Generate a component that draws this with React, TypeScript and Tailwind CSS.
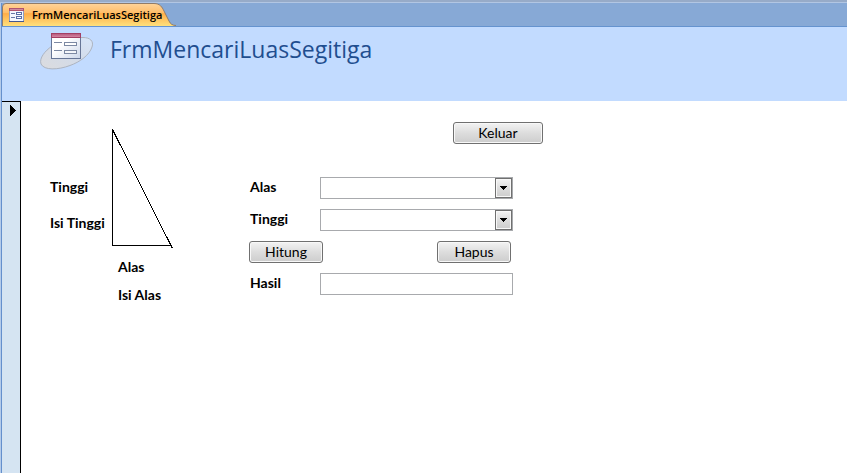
import { useState } from "react";
import type { ReactNode } from "react";

const labelFont =
  "font-['Lato','Liberation_Sans',sans-serif] text-[14px] leading-5 font-bold text-black";

function FormIcon() {
  return (
    <svg width="15" height="14" viewBox="0 0 15 14" aria-hidden="true" shapeRendering="crispEdges">
      <rect x="0.5" y="0.5" width="14" height="13" fill="#f4f7fd" stroke="#8d9dc4" />
      <rect x="0" y="0" width="15" height="3" fill="#b0546f" />
      <rect x="1" y="1" width="13" height="1" fill="#d08a9c" />
      <path d="M2 5.5h4M2 9.5h4" stroke="#6878a8" />
      <rect x="7.5" y="4.5" width="5" height="2" fill="#fff" stroke="#5a6ea6" />
      <rect x="7.5" y="8.5" width="5" height="2" fill="#fff" stroke="#5a6ea6" />
      <path d="M0 13.5h15" stroke="#44578f" />
    </svg>
  );
}

function FormLogo() {
  return (
    <svg width="54" height="38" viewBox="0 0 54 38" aria-hidden="true">
      <defs>
        <linearGradient id="disc" x1="0" y1="1" x2="1" y2="0">
          <stop offset="0" stopColor="#dcdcde" />
          <stop offset="0.5" stopColor="#d3dbe8" />
          <stop offset="1" stopColor="#d6e5fa" />
        </linearGradient>
        <linearGradient id="sheet" x1="0" y1="0" x2="1" y2="1">
          <stop offset="0.4" stopColor="#ffffff" />
          <stop offset="1" stopColor="#ccd7ea" />
        </linearGradient>
        <linearGradient id="bar" x1="0" y1="0" x2="0" y2="1">
          <stop offset="0" stopColor="#b45779" />
          <stop offset="1" stopColor="#d98aa8" />
        </linearGradient>
      </defs>
      <path
        d="M43 4.500C50 4.500 54 8 52 14C49.500 22 40 29 30 32.500C18 37 4 37.500 1 31C-1 25 5 18 12 13C21 7.500 33 4.500 43 4.500Z"
        fill="url(#disc)"
        stroke="#adb4c0"
      />
      <rect x="11.500" y="0.500" width="29" height="25" fill="url(#sheet)" stroke="#667596" />
      <rect x="11.500" y="0.500" width="29" height="4" fill="url(#bar)" stroke="#a33f64" />
      <path d="M14 9.500h8M14 17.500h8" stroke="#7c89a3" />
      <rect x="24.500" y="9.500" width="12" height="3" fill="#fff" stroke="#7c89a3" />
      <rect x="24.500" y="17.500" width="12" height="3" fill="#f4f6fa" stroke="#7c89a3" />
    </svg>
  );
}

function DocumentTab() {
  return (
    <div className="relative h-[23px] w-[176px]">
      <svg className="absolute inset-0" width="176" height="23" viewBox="0 0 176 23" aria-hidden="true">
        <defs>
          <linearGradient id="tab" x1="0" y1="0" x2="0" y2="1">
            <stop offset="0" stopColor="#ffd49a" />
            <stop offset="0.4" stopColor="#ffbe6a" />
            <stop offset="0.45" stopColor="#ffad48" />
            <stop offset="1" stopColor="#ffe07c" />
          </linearGradient>
        </defs>
        <path
          d="M0.500 23V4Q0.500 0.500 4 0.500H152C158 0.500 160 4 162 8L167 18Q169 22.500 174 22.500V23Z"
          fill="url(#tab)"
        />
        <path
          d="M0.500 23V4Q0.500 0.500 4 0.500H152C158 0.500 160 4 162 8L167 18Q169 22.500 174 22.500"
          fill="none"
          stroke="#917c68"
        />
      </svg>
      <div className="relative flex h-full items-center gap-2 pl-[7px] font-['Open_Sans','Noto_Sans',sans-serif] text-[11px] leading-4 font-semibold text-black">
        <FormIcon />
        <span>FrmMencariLuasSegitiga</span>
      </div>
    </div>
  );
}

function CommandButton({
  children,
  wide = false,
  onClick,
}: {
  children: ReactNode;
  wide?: boolean;
  onClick?: () => void;
}) {
  return (
    <button
      type="button"
      onClick={onClick}
      className={`${wide ? "w-[90px]" : "w-[74px]"} h-[22px] rounded-[3px] border border-[#707070] bg-linear-to-b from-[#f3f3f3] from-0% via-[#dddddd] via-50% to-[#cdcdcd] pb-px font-['Lato','Liberation_Sans',sans-serif] text-[14px] leading-5 text-black inset-ring inset-ring-[#f8f8f8]`}
    >
      {children}
    </button>
  );
}

function ComboField({
  id,
  label,
  value,
  onChange,
}: {
  id: string;
  label: string;
  value: string;
  onChange: (value: string) => void;
}) {
  return (
    <div className="flex h-[22px] items-start">
      <label htmlFor={id} className={`w-[71px] pl-px ${labelFont}`}>
        {label}
      </label>
      <div className="relative h-full w-[193px]">
        <select
          id={id}
          value={value}
          onChange={(event) => onChange(event.target.value)}
          className="block h-full w-full appearance-none border border-[#a8aaad] bg-white px-1 text-[13px]"
        >
          <option value="" />
          <option>5</option>
          <option>10</option>
          <option>15</option>
        </select>
        <span className="pointer-events-none absolute top-px right-px flex h-5 w-[17px] items-center justify-center border border-[#707070] bg-linear-to-b from-[#f3f3f3] via-[#dddddd] via-50% to-[#cdcdcd] inset-ring inset-ring-[#f8f8f8]">
          <svg width="7" height="4" viewBox="0 0 7 4" shapeRendering="crispEdges" aria-hidden="true">
            <path d="M0 0h7v1H6v1H5v1H4v1H3V3H2V2H1V1H0z" />
          </svg>
        </span>
      </div>
    </div>
  );
}

export default function App() {
  const [base, setBase] = useState("");
  const [height, setHeight] = useState("");
  const [result, setResult] = useState("");

  const clear = () => {
    setBase("");
    setHeight("");
    setResult("");
  };

  return (
    <div className="flex min-h-screen flex-col bg-white">
      <div className="h-0.5 bg-[#97abc8]" />
      <div className="h-px bg-[#b2c6e3]" />
      <div className="flex flex-1 flex-col border-l border-[#b4cbea]">
        <div className="flex flex-1 flex-col border-l border-[#6590cd]">
          <div className="border-b border-[#6593cf] bg-[#87a9d6]">
            <DocumentTab />
          </div>
          <header className="flex h-[74px] items-start gap-4 bg-[#c2dbff] pt-1.5 pl-[38px]">
            <FormLogo />
            <h1 className="font-['Open_Sans','Noto_Sans',sans-serif] text-[23px] leading-8 text-[#1f4e8f]">
              FrmMencariLuasSegitiga
            </h1>
          </header>
          <main className="flex flex-1">
            <div className="w-[19px] shrink-0 border-t border-r border-black bg-[#d5e4f2] pt-[3px] pl-2">
              <svg width="6" height="11" viewBox="0 0 6 11" shapeRendering="crispEdges" aria-hidden="true">
                <path d="M0 0h1v1h1v1h1v1h1v1h1v1h1v1H5v1H4v1H3v1H2v1H1v1H0z" />
              </svg>
            </div>
            <section className="flex items-start pt-7 pl-[29px]">
              <div className={`flex w-[62px] flex-col gap-4 pt-12 ${labelFont}`}>
                <span>Tinggi</span>
                <span>Isi Tinggi</span>
              </div>
              <div className={`flex w-[137px] flex-col ${labelFont}`}>
                <svg width="61" height="120" viewBox="0 0 61 120" role="img" aria-label="Segitiga">
                  <path
                    d="M0.500 0V116.500H59M0.500 0.500L60.500 119.500"
                    fill="none"
                    stroke="#000"
                    shapeRendering="crispEdges"
                  />
                </svg>
                <div className="flex flex-col gap-2 pt-2 pl-1.5">
                  <span>Alas</span>
                  <span>Isi Alas</span>
                </div>
              </div>
            </section>
            <form className="flex w-[294px] flex-col pt-[21px]">
              <div className="flex justify-end">
                <CommandButton wide>Keluar</CommandButton>
              </div>
              <div className="flex flex-col gap-2.5 pt-[33px]">
                <ComboField id="alas" label="Alas" value={base} onChange={setBase} />
                <ComboField id="tinggi" label="Tinggi" value={height} onChange={setHeight} />
                <div className="flex w-[262px] justify-between">
                  <CommandButton onClick={() => setResult(String((Number(base) * Number(height)) / 2))}>
                    Hitung
                  </CommandButton>
                  <CommandButton onClick={clear}>Hapus</CommandButton>
                </div>
                <div className="flex h-[22px] items-start">
                  <label htmlFor="hasil" className={`w-[71px] pl-px ${labelFont}`}>
                    Hasil
                  </label>
                  <input
                    id="hasil"
                    readOnly
                    value={result}
                    className="h-full w-[193px] border border-[#a8aaad] bg-white px-1 text-[13px]"
                  />
                </div>
              </div>
            </form>
          </main>
        </div>
      </div>
    </div>
  );
}
